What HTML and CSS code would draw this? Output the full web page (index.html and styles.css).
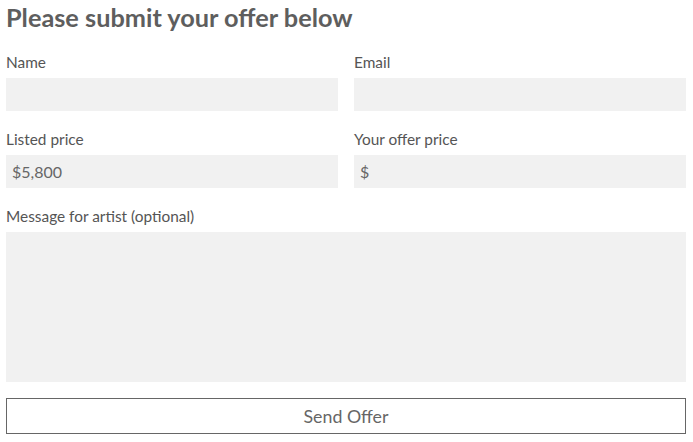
FILE: index.html
```html
<!DOCTYPE html>
<html lang="en">
<head>
    <meta charset="UTF-8">
    <meta name="viewport" content="width=device-width, initial-scale=1.0">
    <title>Submit Offer</title>
    <link rel="stylesheet" href="styles.css">
</head>
<body>
    <div class="offer-form">
        <h2 class="form-title">Please submit your offer below</h2>

        <div class="form-row">
            <div class="form-group">
                <label for="name">Name</label>
                <input type="text" id="name">
            </div>
            <div class="form-group">
                <label for="email">Email</label>
                <input type="email" id="email">
            </div>
        </div>

        <div class="form-row">
            <div class="form-group">
                <label for="listed">Listed price</label>
                <input type="text" id="listed" value="$5,800" readonly>
            </div>
            <div class="form-group">
                <label for="offer">Your offer price</label>
                <input type="text" id="offer" value="$">
            </div>
        </div>

        <div class="form-group">
            <label for="message">Message for artist (optional)</label>
            <textarea id="message"></textarea>
        </div>

        <button class="send-btn">Send Offer</button>
    </div>
</body>
</html>
```

FILE: styles.css
```css
body {
    margin: 0;
    padding: 0 7px 0 6px;
    font-family: Lato, "Open Sans", sans-serif;
    color: #5a5a5a;
    background: #fff;
}
.form-title {
    margin: 0;
    height: 51px;
    padding-top: 2px;
    box-sizing: border-box;
    font-size: 25.3px;
    line-height: 30px;
    font-weight: bold;
    color: #5e5e5e;
}
.form-row {
    display: grid;
    grid-template-columns: 1fr 1fr;
    column-gap: 16px;
}
.form-group {
    display: flex;
    flex-direction: column;
    margin-bottom: 17px;
}
label {
    display: block;
    height: 22px;
    line-height: 22px;
    margin-bottom: 5px;
    font-size: 15.4px;
    color: #555;
}
input, textarea {
    box-sizing: border-box;
    width: 100%;
    border: none;
    border-radius: 0;
    background-color: #f1f1f1;
    font-family: inherit;
    font-size: 16px;
    color: #666;
    padding: 0 6px;
    outline: none;
}
input {
    height: 33px;
}
textarea {
    height: 150px;
    resize: none;
    padding: 6px;
}
.form-group:last-of-type {
    margin-bottom: 16px;
}
.send-btn {
    display: block;
    box-sizing: border-box;
    width: 100%;
    height: 36px;
    background: #fff;
    border: 1px solid #666;
    font-family: inherit;
    font-size: 17.8px;
    color: #666;
    cursor: pointer;
}
```
